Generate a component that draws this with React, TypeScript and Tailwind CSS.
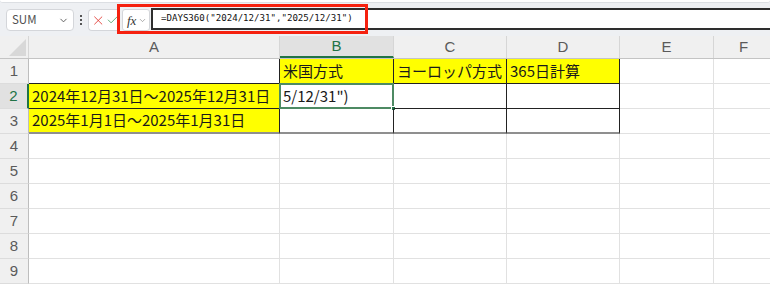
import { Check, ChevronDown, X } from "lucide-react";

const cols = [
  { key: "A", w: "w-[251px]" },
  { key: "B", w: "w-[114px]" },
  { key: "C", w: "w-[113px]" },
  { key: "D", w: "w-[113px]" },
  { key: "E", w: "w-[94px]" },
  { key: "F", w: "w-[60px]" },
];

type Cell = { text?: string; cls: string };

// per-cell borders are written out in full so tailwind picks them up
const rows: { n: number; active?: boolean; cells: Cell[] }[] = [
  {
    n: 1,
    cells: [
      { cls: "border-r border-r-[#222] border-b border-b-[#222]" },
      { text: "米国方式", cls: "bg-[#ffff00] border-r border-r-[#222] border-b border-b-[#222]" },
      { text: "ヨーロッパ方式", cls: "bg-[#ffff00] border-r border-r-[#222] border-b border-b-[#222]" },
      { text: "365日計算", cls: "bg-[#ffff00] border-r border-r-[#222] border-b border-b-[#222]" },
      { cls: "border-r border-r-[#e1e1e1] border-b border-b-[#e1e1e1]" },
      { cls: "border-b border-b-[#e1e1e1]" },
    ],
  },
  {
    n: 2,
    active: true,
    cells: [
      { text: "2024年12月31日～2025年12月31日", cls: "bg-[#ffff00] border-r border-r-[#222] border-b border-b-[#222]" },
      { text: "5/12/31\")", cls: "border-r border-r-[#222] border-b border-b-[#222]" },
      { cls: "border-r border-r-[#222] border-b border-b-[#222]" },
      { cls: "border-r border-r-[#222] border-b border-b-[#222]" },
      { cls: "border-r border-r-[#e1e1e1] border-b border-b-[#e1e1e1]" },
      { cls: "border-b border-b-[#e1e1e1]" },
    ],
  },
  {
    n: 3,
    cells: [
      { text: "2025年1月1日～2025年1月31日", cls: "bg-[#ffff00] border-r border-r-[#222] border-b-2 border-b-[#8f8f8f]" },
      { cls: "border-r border-r-[#222] border-b-2 border-b-[#8f8f8f]" },
      { cls: "border-r border-r-[#222] border-b-2 border-b-[#8f8f8f]" },
      { cls: "border-r border-r-[#222] border-b-2 border-b-[#8f8f8f]" },
      { cls: "border-r border-r-[#e1e1e1] border-b border-b-[#e1e1e1]" },
      { cls: "border-b border-b-[#e1e1e1]" },
    ],
  },
];

const emptyRows = [4, 5, 6, 7, 8, 9];

function FormulaBar() {
  return (
    <div className="relative h-[36px] bg-[#eef0f3]">
      <div className="h-[3px] rounded-b-[4px] border-b border-[#dcdfe3] bg-white" />
      <div className="flex items-start pt-[6px]">
        <div className="ml-[6px] flex h-[22px] w-[68px] items-center justify-between rounded-[4px] border border-[#d4d6da] bg-white pl-[5px] pr-[4px]">
          <span className="text-[11.5px] text-[#505050]">SUM</span>
          <ChevronDown size={11} strokeWidth={2} className="text-[#555]" />
        </div>
        <div className="ml-[6px] flex h-[22px] flex-col items-center justify-center gap-[2px]">
          <span className="h-[2px] w-[2px] bg-[#555]" />
          <span className="h-[2px] w-[2px] bg-[#555]" />
          <span className="h-[2px] w-[2px] bg-[#555]" />
        </div>
        <div className="ml-[6px] flex h-[22px] w-[32px] items-center gap-[1px] rounded-l-[4px] border border-r-0 border-[#d4d6da] bg-white pl-[2px]">
          <X size={15} strokeWidth={1.4} className="text-[#e0312a]" />
          <Check size={14} strokeWidth={1.4} className="text-[#3b9a5a]" />
        </div>
        <div className="ml-[2px] flex h-[22px] w-[28px] items-center gap-[2px] rounded-[3px] border border-[#d4d6da] bg-white pl-[4px]">
          <span className="font-['Liberation_Serif',serif] text-[13px] italic leading-none text-[#333]">fx</span>
          <ChevronDown size={9} strokeWidth={1.8} className="text-[#888]" />
        </div>
        <div className="-mt-px ml-px flex h-[22px] flex-1 items-center border-2 border-r-0 border-[#2e2e2e] bg-white pl-[8px]">
          <span className="font-['DejaVu_Sans_Mono',monospace] text-[9.1px] text-[#111]">
            =DAYS360("2024/12/31","2025/12/31")
          </span>
        </div>
      </div>
      {/* annotation box drawn over the bar */}
      <div className="absolute left-[117px] top-[4px] h-[30px] w-[251px] border-[3px] border-[#f5210f]" />
    </div>
  );
}

export default function App() {
  return (
    <div className="h-[284px] w-[770px] overflow-hidden bg-white font-['Noto_Sans_CJK_JP','Noto_Sans',sans-serif]">
      <FormulaBar />

      <div className="flex h-[23px] border-b border-[#c4c4c4] bg-[#f0f0f0]">
        <div className="relative w-[29px] shrink-0 border-r border-[#d6d6d6]">
          <div className="absolute bottom-[2px] right-[2px] h-0 w-0 border-b-[17px] border-l-[17px] border-b-[#d8d8d8] border-l-transparent" />
        </div>
        {cols.map((c) => (
          <div
            key={c.key}
            className={`${c.w} flex shrink-0 items-center justify-center border-r border-[#d6d6d6] font-['Liberation_Sans',sans-serif] text-[15px] ${
              c.key === "B"
                ? "border-b-2 border-b-[#217346] bg-[#e1e1e1] text-[#217346]"
                : "text-[#5a5a5a]"
            }`}
          >
            {c.key}
          </div>
        ))}
      </div>

      {rows.map((r) => (
        <div key={r.n} className="flex h-[25px]">
          <div
            className={`flex w-[29px] shrink-0 items-center justify-center border-b border-b-[#dcdcdc] font-['Liberation_Sans',sans-serif] text-[15px] ${
              r.active
                ? "border-r-2 border-r-[#217346] bg-[#e1e1e1] text-[#217346]"
                : "border-r border-r-[#bdbdbd] bg-[#f0f0f0] text-[#5a5a5a]"
            }`}
          >
            {r.n}
          </div>
          {r.cells.map((cell, i) => (
            <div
              key={i}
              className={`${cols[i].w} relative flex shrink-0 items-center overflow-visible whitespace-nowrap pl-[3px] text-[15px] text-[#1a1a1a] ${cell.cls}`}
            >
              {cell.text}
              {r.active && i === 1 && (
                <>
                  <div className="absolute -left-px -top-px h-[26px] w-[115px] border-2 border-[#4d8a63]" />
                  <div className="absolute -bottom-[3px] -right-[3px] h-[5px] w-[5px] border border-white bg-[#217346]" />
                </>
              )}
            </div>
          ))}
        </div>
      ))}

      {emptyRows.map((n) => (
        <div key={n} className="flex h-[25px]">
          <div className="flex w-[29px] shrink-0 items-center justify-center border-b border-r border-b-[#dcdcdc] border-r-[#bdbdbd] bg-[#f0f0f0] font-['Liberation_Sans',sans-serif] text-[15px] text-[#5a5a5a]">
            {n}
          </div>
          {cols.map((c, i) => (
            <div
              key={c.key}
              className={`${c.w} shrink-0 border-b border-[#e1e1e1] ${i < cols.length - 1 ? "border-r" : ""}`}
            />
          ))}
        </div>
      ))}
    </div>
  );
}
